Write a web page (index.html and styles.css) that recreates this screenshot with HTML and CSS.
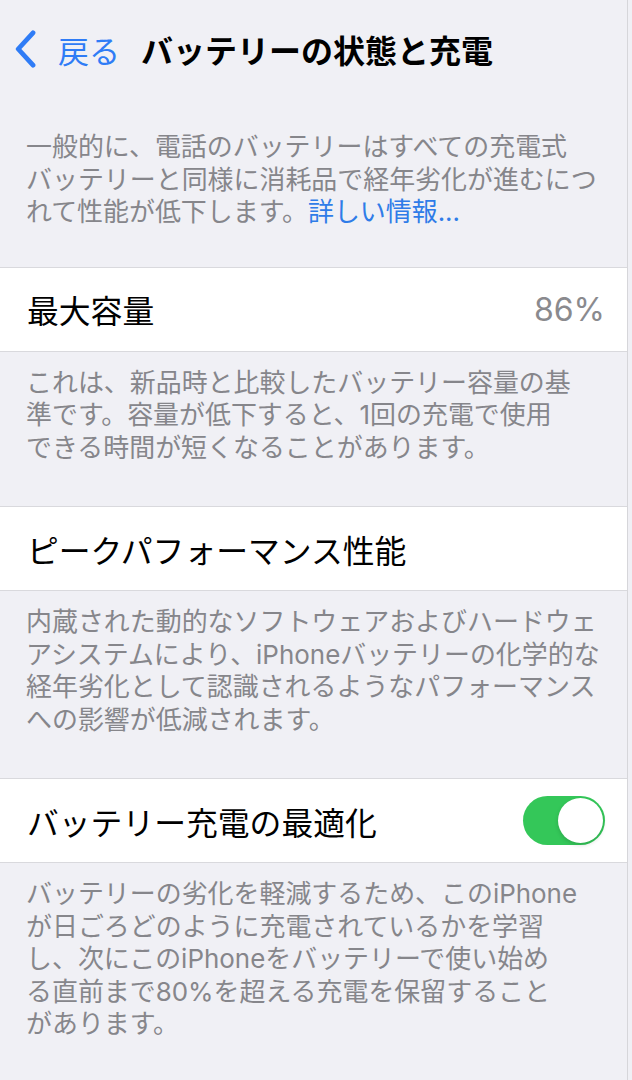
FILE: index.html
```html
<!DOCTYPE html>
<html lang="ja">
<head>
  <meta charset="UTF-8">
  <meta name="viewport" content="width=device-width, initial-scale=1.0">
  <title>バッテリーの状態と充電</title>
  <link rel="stylesheet" href="styles.css">
</head>
<body>
  <div id="screen">
    <header class="nav">
      <a class="back" href="#">
        <svg class="chevron" width="22" height="38" viewBox="0 0 22 38">
          <polyline points="19,2.8 4.2,19 19,35.2" fill="none" stroke="currentColor" stroke-width="4.8" stroke-linecap="round" stroke-linejoin="round"/>
        </svg>
        <span>戻る</span>
      </a>
      <h1 class="title">バッテリーの状態と充電</h1>
    </header>

    <p class="note note-top">
      一般的に、電話のバッテリーはすべての充電式<br>
      バッテリーと同様に消耗品で経年劣化が進むにつ<br>
      れて性能が低下します。<a href="#">詳しい情報...</a>
    </p>

    <div class="row">
      <span class="label">最大容量</span>
      <span class="value">86%</span>
    </div>
    <p class="note">
      これは、新品時と比較したバッテリー容量の基<br>
      準です。容量が低下すると、1回の充電で使用<br>
      できる時間が短くなることがあります。
    </p>

    <div class="row">
      <span class="label">ピークパフォーマンス性能</span>
    </div>
    <p class="note">
      内蔵された動的なソフトウェアおよびハードウェ<br>
      アシステムにより、iPhoneバッテリーの化学的な<br>
      経年劣化として認識されるようなパフォーマンス<br>
      への影響が低減されます。
    </p>

    <div class="row">
      <span class="label">バッテリー充電の最適化</span>
      <span class="toggle on"></span>
    </div>
    <p class="note">
      バッテリーの劣化を軽減するため、このiPhone<br>
      が日ごろどのように充電されているかを学習<br>
      し、次にこのiPhoneをバッテリーで使い始め<br>
      る直前まで80%を超える充電を保留すること<br>
      があります。
    </p>
  </div>
</body>
</html>
```

FILE: styles.css
```css
body {
  margin: 0;
  padding: 0;
  background-color: #f0f0f5;
  font-family: 'Inter', 'Noto Sans CJK JP', sans-serif;
  color: #000;
}

#screen {
  width: 627px;
  min-height: 1080px;
  border-right: 1px solid #d6d6da;
}

/* ナビゲーションバー */
.nav {
  display: flex;
  align-items: center;
  height: 98px;
  padding-left: 14px;
}

.back {
  display: flex;
  align-items: center;
  color: #2f7cf6;
  text-decoration: none;
  font-size: 31px;
}

.chevron {
  margin-right: 22px;
}

.title {
  margin: 0 0 0 21px;
  font-size: 32px;
  font-weight: 700;
}

/* セクションの説明文 */
.note {
  margin: 0;
  padding: 15px 26px 42px;
  font-size: 25.95px;
  line-height: 32.5px;
  color: #86868b;
  white-space: nowrap;
}

.note-top {
  padding-top: 33px;
  padding-bottom: 38px;
}

.note a {
  color: #2f7ce8;
  text-decoration: none;
}

/* 白いセル */
.row {
  display: flex;
  align-items: center;
  justify-content: space-between;
  height: 85px;
  box-sizing: border-box;
  padding: 0 22px 0 27px;
  background-color: #fff;
  border-top: 1px solid #d9d9dd;
  border-bottom: 1px solid #d9d9dd;
}

.label {
  font-size: 31.8px;
}

.value {
  font-size: 32px;
  color: #8a8a8e;
}

.toggle {
  position: relative;
  width: 82px;
  height: 49px;
  border-radius: 25px;
  background-color: #e5e5ea;
}

.toggle.on {
  background-color: #34c759;
}

.toggle::after {
  content: '';
  position: absolute;
  top: 2px;
  left: 2px;
  width: 45px;
  height: 45px;
  border-radius: 50%;
  background-color: #fff;
  box-shadow: 0 2px 4px rgba(0, 0, 0, 0.15);
}

.toggle.on::after {
  left: auto;
  right: 2px;
}
```
